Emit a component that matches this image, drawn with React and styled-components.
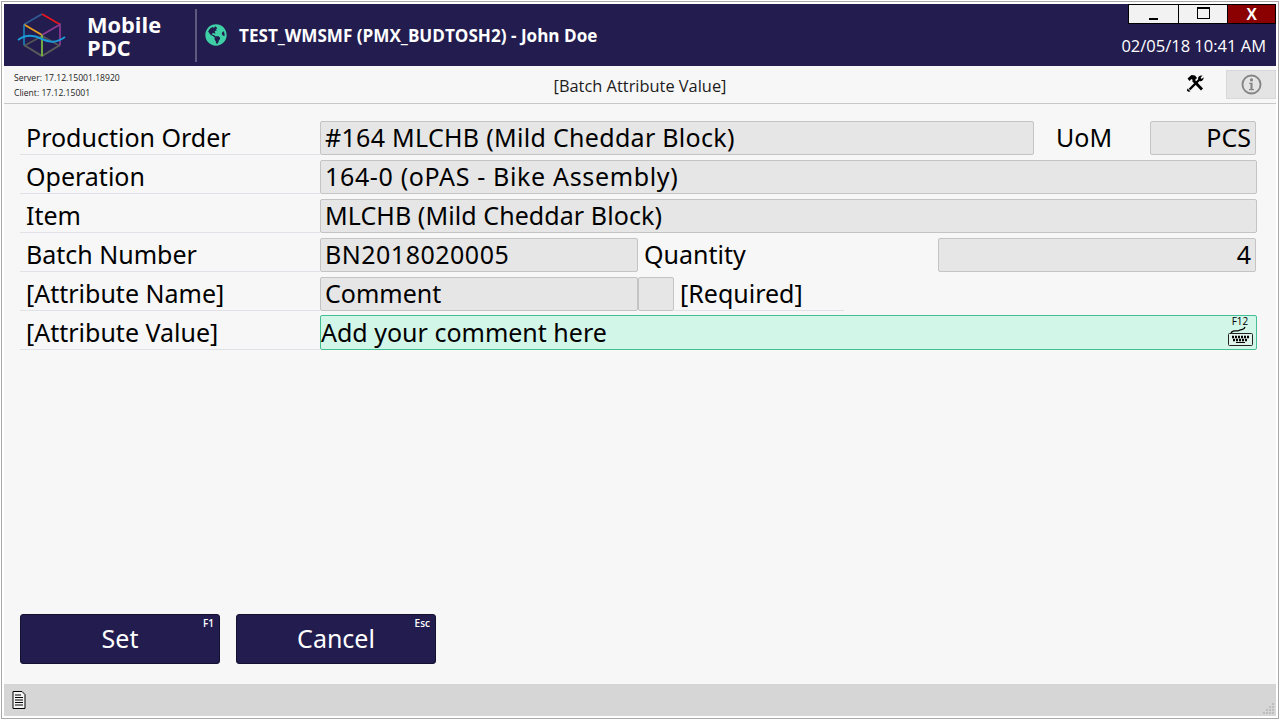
import React from 'react';
import styled, { createGlobalStyle } from 'styled-components';
import { FaGlobeAmericas } from 'react-icons/fa';

const navy = '#231d4f';
const font = '"Noto Sans", "Open Sans", sans-serif';

const GlobalStyle = createGlobalStyle`
  html, body {
    margin: 0;
    background: #ffffff;
  }
  * {
    box-sizing: border-box;
  }
`;

const Frame = styled.div`
  width: 1280px;
  height: 720px;
  padding: 1px;
  font-family: ${font};
  color: #000;
`;

const Window = styled.div`
  height: 100%;
  border: 1px solid #a9a9a9;
  padding: 2px;
  background: #fff;
  display: flex;
  flex-direction: column;
`;

const Header = styled.header`
  height: 62px;
  background: ${navy};
  color: #fff;
  display: flex;
  align-items: center;
  flex: none;
`;

const Logo = styled.svg`
  width: 70px;
  height: 55px;
  margin-left: 6px;
  flex: none;
`;

const Brand = styled.div`
  width: 108px;
  margin-left: 7px;
  padding-top: 1px;
  font-size: 21.8px;
  line-height: 23px;
  font-weight: 700;
  font-family: "Open Sans", sans-serif;
`;

const Divider = styled.div`
  width: 2px;
  height: 53px;
  background: #5d5a7f;
  flex: none;
`;

const Globe = styled(FaGlobeAmericas)`
  width: 22px;
  height: 22px;
  margin-left: 8px;
  color: #3fcfa6;
  flex: none;
`;

const AppTitle = styled.div`
  margin-left: 12px;
  font-size: 17.1px;
  font-weight: 700;
  font-family: "Open Sans", sans-serif;
  white-space: nowrap;
`;

const HeaderRight = styled.div`
  margin-left: auto;
  align-self: stretch;
  display: flex;
  flex-direction: column;
  align-items: flex-end;
`;

const WindowButtons = styled.div`
  display: flex;
  border: 1px solid #000;
  height: 20px;
`;

const WindowButton = styled.div`
  width: ${p => p.$close ? 48 : 49}px;
  height: 100%;
  background: ${p => p.$close ? '#8b0000' : '#f2f2f2'};
  border-left: ${p => p.$first ? 0 : '1px solid #000'};
  color: #fff;
  font-family: "Liberation Sans", sans-serif;
  font-weight: 700;
  font-size: 16px;
  line-height: 19px;
  text-align: center;
  display: flex;
  align-items: center;
  justify-content: center;
`;

const MinGlyph = styled.span`
  width: 9px;
  height: 2px;
  background: #000;
  margin-top: 9px;
`;

const MaxGlyph = styled.span`
  width: 13px;
  height: 12px;
  border: 1px solid #000;
  border-top-width: 2px;
  margin-top: -2px;
`;

const Clock = styled.div`
  margin-top: 12px;
  margin-right: 10px;
  font-size: 16.5px;
  line-height: 20px;
  font-family: "Open Sans", sans-serif;
  white-space: nowrap;
`;

const SubHeader = styled.div`
  height: 38px;
  flex: none;
  background: #f7f7f7;
  border-bottom: 1px solid #c8c8c8;
  display: grid;
  grid-template-columns: 1fr auto 1fr;
  align-items: center;
`;

const Versions = styled.div`
  padding-left: 10px;
  padding-top: 3px;
  font-size: 8.6px;
  line-height: 15px;
  font-family: "Open Sans", sans-serif;
  color: #222;
`;

const ScreenTitle = styled.div`
  padding-top: 2px;
  font-size: 16.4px;
  color: #1c1c1c;
  font-family: "Open Sans", sans-serif;
`;

const SubTools = styled.div`
  display: flex;
  justify-content: flex-end;
  align-items: center;
`;

const ToolsIcon = styled.svg`
  width: 20px;
  height: 20px;
  margin-right: 21px;
  margin-top: -3px;
`;

const InfoButton = styled.div`
  width: 50px;
  height: 29px;
  background: #e4e4e4;
  border: 1px solid #d8d8d8;
  display: flex;
  align-items: center;
  justify-content: center;
`;

const Body = styled.main`
  flex: 1;
  background: #f7f7f7;
  display: flex;
  flex-direction: column;
  padding: 12px 19px 20px 16px;
`;

const Form = styled.div`
  display: flex;
  flex-direction: column;
`;

const Row = styled.div`
  height: 39px;
  display: flex;
  align-items: flex-end;
`;

const RowLabel = styled.div`
  width: 300px;
  height: 100%;
  flex: none;
  padding-left: 6px;
  border-bottom: 1px solid #dfe3e8;
  font-size: 25px;
  line-height: 38px;
  padding-top: 2px;
  white-space: nowrap;
`;

const Field = styled.div`
  width: ${p => p.$w ? `${p.$w}px` : 'auto'};
  flex: ${p => p.$w ? 'none' : 1};
  height: 34px;
  padding: 0 4px;
  background: #e6e6e6;
  border: 1px solid #c4c4c4;
  border-radius: 2px;
  font-size: 25px;
  line-height: 30px;
  letter-spacing: ${p => p.$track || 0}px;
  text-align: ${p => p.$right ? 'right' : 'left'};
  white-space: nowrap;
`;

const InputField = styled.div`
  flex: 1;
  height: 35px;
  padding: 0;
  background: #d2f6e8;
  border: 1px solid #44bf93;
  border-radius: 2px;
  font-size: 25px;
  line-height: 33px;
  display: flex;
  justify-content: space-between;
  white-space: nowrap;
`;

const KeyHint = styled.div`
  width: 26px;
  margin-right: 3px;
  display: flex;
  flex-direction: column;
  align-items: center;
  font-size: 10px;
  line-height: 9px;
  padding-top: 1px;
  font-family: "Open Sans", sans-serif;
`;

const InlineLabel = styled.div`
  width: ${p => p.$w}px;
  flex: none;
  padding-left: ${p => p.$pad}px;
  height: 34px;
  font-size: 25px;
  line-height: 32px;
  white-space: nowrap;
  border-bottom: ${p => p.$line ? '1px solid #dfe3e8' : 0};
`;

const Actions = styled.div`
  margin-top: auto;
  display: flex;
  gap: 16px;
`;

const ActionButton = styled.div`
  position: relative;
  width: 200px;
  height: 50px;
  background: ${navy};
  border: 1px solid #14102f;
  border-radius: 3px;
  color: #fff;
  font-size: 25px;
  line-height: 46px;
  text-align: center;
`;

const ShortcutTag = styled.span`
  position: absolute;
  top: 2px;
  right: 5px;
  font-size: 10px;
  line-height: 12px;
  font-weight: 600;
  font-family: "Open Sans", sans-serif;
`;

const StatusBar = styled.footer`
  position: relative;
  height: 32px;
  flex: none;
  background: #d6d6d6;
  display: flex;
  align-items: center;
  padding-left: 8px;
`;

const Grip = styled.svg`
  position: absolute;
  right: 1px;
  bottom: 2px;
  width: 12px;
  height: 12px;
`;

const CubeLogo = () => (
  <Logo viewBox="0 0 70 55" fill="none" strokeWidth="1.7">
    <path d="M14 38 L32 28 L50 38" stroke="#555" />
    <path d="M14 37 L32 48 L50 37" stroke="#5a5a5a" strokeWidth="2" />
    <path d="M32 6 L14 16.5" stroke="#2f5b92" />
    <path d="M32 6 L50 16.5" stroke="#e8141c" />
    <path d="M14 16.5 L32 27" stroke="#e8a020" />
    <path d="M32 27 L50 16.5 L50 37" stroke="#8c3a92" />
    <path d="M14 16.5 L14 37" stroke="#1b7fb8" />
    <path d="M32 27 L32 48" stroke="#7fc241" />
    <path d="M8 32 C 16 26, 24 27, 32 31 S 46 35, 55 29" stroke="#1a9ad6" strokeWidth="2" />
  </Logo>
);

const HammerWrench = () => (
  <ToolsIcon viewBox="0 0 20 20" fill="none">
    <path d="M8 7 L17 16.5" stroke="#000" strokeWidth="2.8" />
    <path d="M2.5 5.5 L6.5 2 L10 2.5 L12 5 L9 8 L6.5 6 L4.5 8 Z" fill="#000" />
    <path d="M14.5 6.5 L4.5 16.5" stroke="#000" strokeWidth="2.4" />
    <path d="M13 5.5 C13 3.5 15 2 17.5 2.6 L15.6 4.6 L16.6 6 L18.6 4.2 C19 7 16.5 8.8 14.6 8 Z" fill="#000" />
    <path d="M2.6 15.5 L5.5 18.5 L3.4 18.8 L1.8 17.4 Z" fill="#000" />
  </ToolsIcon>
);

const InfoIcon = () => (
  <svg width="21" height="21" viewBox="0 0 20 20" fill="none">
    <circle cx="10" cy="10" r="8.6" stroke="#858585" strokeWidth="1.8" />
    <circle cx="10" cy="5.6" r="1.5" fill="#858585" />
    <path d="M7.8 8.4 H11 V14.2 H12.4 V15.4 H7.6 V14.2 H9 V9.6 H7.8 Z" fill="#858585" />
  </svg>
);

const KeyboardIcon = () => (
  <svg width="25" height="20" viewBox="0 0 25 20" fill="none">
    <path d="M3 7.5 C 4 3, 8 6, 11 4.5 S 16 4.5, 17 1" stroke="#000" strokeWidth="1.3" />
    <rect x=".5" y="7.5" width="24" height="12" rx="1" fill="#dff3ea" stroke="#222" />
    <path d="M4 11 H21" stroke="#000" strokeWidth="2.4" strokeDasharray="2 1" />
    <path d="M5 14 H20" stroke="#000" strokeWidth="2.4" strokeDasharray="2 1" />
    <path d="M8 16.5 H17" stroke="#000" />
  </svg>
);

const DocIcon = () => (
  <svg width="14" height="18" viewBox="0 0 14 18" fill="none">
    <path d="M1 .5 H10 L13 3.5 V17.5 H1 Z" fill="#f4f4f4" stroke="#000" />
    <path d="M3 4 H9 M3 6.5 H11 M3 9 H11 M3 11.5 H11 M3 14 H11" stroke="#000" />
  </svg>
);

const ResizeGrip = () => (
  <Grip viewBox="0 0 12 12" fill="#bdbdbd">
    <rect x="9" y="1" width="2" height="2" />
    <rect x="6" y="4" width="2" height="2" />
    <rect x="9" y="4" width="2" height="2" />
    <rect x="3" y="7" width="2" height="2" />
    <rect x="6" y="7" width="2" height="2" />
    <rect x="9" y="7" width="2" height="2" />
    <rect x="0" y="10" width="2" height="2" />
    <rect x="3" y="10" width="2" height="2" />
    <rect x="6" y="10" width="2" height="2" />
    <rect x="9" y="10" width="2" height="2" />
  </Grip>
);

const App = () => (
  <Frame>
    <GlobalStyle />
    <Window>
      <Header>
        <CubeLogo />
        <Brand>Mobile<br />PDC</Brand>
        <Divider />
        <Globe />
        <AppTitle>TEST_WMSMF (PMX_BUDTOSH2) - John Doe</AppTitle>
        <HeaderRight>
          <WindowButtons>
            <WindowButton $first><MinGlyph /></WindowButton>
            <WindowButton><MaxGlyph /></WindowButton>
            <WindowButton $close>X</WindowButton>
          </WindowButtons>
          <Clock>02/05/18 10:41 AM</Clock>
        </HeaderRight>
      </Header>
      <SubHeader>
        <Versions>
          Server: 17.12.15001.18920<br />
          Client: 17.12.15001
        </Versions>
        <ScreenTitle>[Batch Attribute Value]</ScreenTitle>
        <SubTools>
          <HammerWrench />
          <InfoButton><InfoIcon /></InfoButton>
        </SubTools>
      </SubHeader>
      <Body>
        <Form>
          <Row>
            <RowLabel>Production Order</RowLabel>
            <Field $w={714} $track={0.3}>#164 MLCHB (Mild Cheddar Block)</Field>
            <InlineLabel $w={116} $pad={22}>UoM</InlineLabel>
            <Field $w={106} $right>PCS</Field>
          </Row>
          <Row>
            <RowLabel>Operation</RowLabel>
            <Field $track={0.65}>164-0 (oPAS - Bike Assembly)</Field>
          </Row>
          <Row>
            <RowLabel>Item</RowLabel>
            <Field $track={0.08}>MLCHB (Mild Cheddar Block)</Field>
          </Row>
          <Row>
            <RowLabel>Batch Number</RowLabel>
            <Field $w={318} $track={0.5}>BN2018020005</Field>
            <InlineLabel $w={300} $pad={6}>Quantity</InlineLabel>
            <Field $w={318} $right>4</Field>
          </Row>
          <Row>
            <RowLabel>[Attribute Name]</RowLabel>
            <Field $w={318}>Comment</Field>
            <Field $w={36} />
            <InlineLabel $w={170} $pad={6} $line>[Required]</InlineLabel>
          </Row>
          <Row>
            <RowLabel>[Attribute Value]</RowLabel>
            <InputField>
              Add your comment here
              <KeyHint>F12<KeyboardIcon /></KeyHint>
            </InputField>
          </Row>
        </Form>
        <Actions>
          <ActionButton>Set<ShortcutTag>F1</ShortcutTag></ActionButton>
          <ActionButton>Cancel<ShortcutTag>Esc</ShortcutTag></ActionButton>
        </Actions>
      </Body>
      <StatusBar><DocIcon /><ResizeGrip /></StatusBar>
    </Window>
  </Frame>
);

export default App;
